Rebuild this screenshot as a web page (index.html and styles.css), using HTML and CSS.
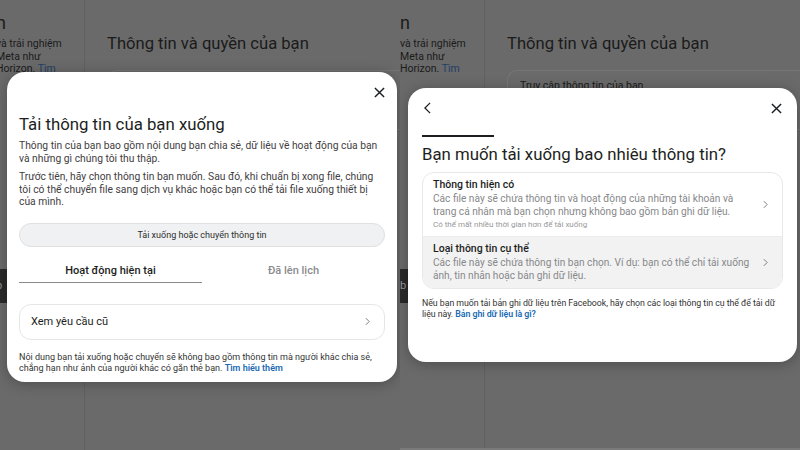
FILE: index.html
```html
<!DOCTYPE html>
<html lang="vi">
<head>
<meta charset="utf-8">
<title>Tải thông tin của bạn xuống</title>
<link rel="stylesheet" href="styles.css">
</head>
<body>
<div class="shot">
  <section class="panel panel-left">
    <div class="page">
      <aside class="side side-a">
        <div class="side-head">n</div>
        <div class="side-lines">
          <div>và trải nghiệm</div>
          <div>Meta như</div>
          <div>Horizon. <span class="dim-link">Tìm</span></div>
        </div>
        <div class="side-btn">b</div>
      </aside>
      <main class="main">
        <h2 class="main-head">Thông tin và quyền của bạn</h2>
        <div class="bg-card"><span>Truy cập thông tin của bạn</span></div>
      </main>
    </div>

    <div class="modal modal-a">
      <div class="modal-top">
        <span></span>
        <svg class="ico-x" viewBox="0 0 12 12"><path d="M1 1L11 11M11 1L1 11"/></svg>
      </div>
      <h1 class="m-title">Tải thông tin của bạn xuống</h1>
      <p class="m-text">Thông tin của bạn bao gồm nội dung bạn chia sẻ, dữ liệu về hoạt động của bạn và những gì chúng tôi thu thập.</p>
      <p class="m-text">Trước tiên, hãy chọn thông tin bạn muốn. Sau đó, khi chuẩn bị xong file, chúng tôi có thể chuyển file sang dịch vụ khác hoặc bạn có thể tải file xuống thiết bị của mình.</p>
      <div class="pill">Tải xuống hoặc chuyển thông tin</div>
      <div class="tabs">
        <div class="tab tab-on">Hoạt động hiện tại</div>
        <div class="tab">Đã lên lịch</div>
      </div>
      <div class="row-card">
        <span>Xem yêu cầu cũ</span>
        <svg class="ico-chev" viewBox="0 0 6 10"><path d="M1 1L5 5L1 9"/></svg>
      </div>
      <p class="m-foot">Nội dung bạn tải xuống hoặc chuyển sẽ không bao gồm thông tin mà người khác chia sẻ, chẳng hạn như ảnh của người khác có gắn thẻ bạn. <a class="link">Tìm hiểu thêm</a></p>
    </div>
  </section>

  <section class="panel panel-right">
    <div class="page">
      <aside class="side side-b">
        <div class="side-head">n</div>
        <div class="side-lines">
          <div>và trải nghiệm</div>
          <div>Meta như</div>
          <div>Horizon. <span class="dim-link">Tìm</span></div>
        </div>
        <div class="side-btn">b</div>
      </aside>
      <main class="main">
        <h2 class="main-head">Thông tin và quyền của bạn</h2>
        <div class="bg-card"><span>Truy cập thông tin của bạn</span></div>
      </main>
    </div>

    <div class="modal modal-b">
      <div class="modal-top">
        <svg class="ico-back" viewBox="0 0 8 14"><path d="M7 1L1 7L7 13"/></svg>
        <svg class="ico-x" viewBox="0 0 12 12"><path d="M1 1L11 11M11 1L1 11"/></svg>
      </div>
      <div class="progress"></div>
      <h1 class="m-title">Bạn muốn tải xuống bao nhiêu thông tin?</h1>
      <div class="choices">
        <div class="choice">
          <div class="choice-body">
            <div class="choice-title">Thông tin hiện có</div>
            <div class="choice-desc">Các file này sẽ chứa thông tin và hoạt động của những tài khoản và trang cá nhân mà bạn chọn nhưng không bao gồm bản ghi dữ liệu.</div>
            <div class="choice-note">Có thể mất nhiều thời gian hơn để tải xuống</div>
          </div>
          <svg class="ico-chev" viewBox="0 0 6 10"><path d="M1 1L5 5L1 9"/></svg>
        </div>
        <div class="choice choice-hover">
          <div class="choice-body">
            <div class="choice-title">Loại thông tin cụ thể</div>
            <div class="choice-desc">Các file này sẽ chứa thông tin bạn chọn. Ví dụ: bạn có thể chỉ tải xuống ảnh, tin nhắn hoặc bản ghi dữ liệu.</div>
          </div>
          <svg class="ico-chev" viewBox="0 0 6 10"><path d="M1 1L5 5L1 9"/></svg>
        </div>
      </div>
      <p class="m-foot">Nếu bạn muốn tải bản ghi dữ liệu trên Facebook, hãy chọn các loại thông tin cụ thể để tải dữ liệu này. <a class="link">Bản ghi dữ liệu là gì?</a></p>
    </div>
  </section>
</div>
</body>
</html>
```

FILE: styles.css
```css
* { box-sizing: border-box; }
html, body { margin: 0; padding: 0; }
body {
  width: 800px;
  height: 450px;
  overflow: hidden;
  background: #6a6a6a;
  font-family: Roboto, "Noto Sans", "Liberation Sans", sans-serif;
  color: #1c1e21;
}
.shot { display: flex; width: 800px; height: 450px; }
.panel {
  position: relative;
  width: 400px;
  height: 450px;
  overflow: hidden;
  background: #6a6a6a;
}
.panel-right { border-bottom: 2px solid #7a7a7a; }

/* dimmed background page */
.page { display: flex; height: 100%; }
.side {
  width: 85px;
  flex: none;
  border-right: 1px solid #606060;
  color: #1b1b1b;
  padding-top: 12px;
}
.side-a { margin-left: -4px; width: 89px; }
.side-head { font-size: 18px; line-height: 22px; height: 22px; }
.side-lines { margin-top: 4px; font-size: 10.5px; line-height: 12.5px; white-space: nowrap; }
.dim-link { color: #1f3f66; }
.side-btn {
  margin-top: 193px;
  width: 40px;
  height: 34px;
  background: #2a2a2a;
  color: #9a9a9a;
  font-size: 11px;
  line-height: 34px;
}
.main { flex: 1; padding: 33px 0 0 22px; }
.main-head {
  margin: 0;
  font-size: 16.6px;
  font-weight: 400;
  line-height: 22px;
  color: #1b1b1b;
}
.bg-card {
  margin-top: 15px;
  height: 60px;
  border: 1px solid #767676;
  border-right: none;
  border-radius: 10px 0 0 10px;
  padding: 8px 12px;
  font-size: 10.5px;
  line-height: 13px;
  color: #1b1b1b;
}

/* modals */
.modal {
  position: absolute;
  background: #fff;
  border-radius: 18px;
  box-shadow: 0 2px 14px rgba(0,0,0,0.28);
  display: flex;
  flex-direction: column;
}
.modal-a { left: 7px; top: 72px; width: 390px; height: 310px; padding: 12px 12px 0 12px; }
.modal-b { left: 8px; top: 88px; width: 389px; height: 274px; padding: 12px 14px 0 14px; }

.modal-top {
  display: flex;
  justify-content: space-between;
  align-items: center;
  height: 16px;
}
.ico-x { width: 11px; height: 11px; fill: none; stroke: #1c1e21; stroke-width: 1.6; }
.modal-a .ico-x { margin-right: 0; }
.modal-b .ico-x { margin-right: 1px; }
.ico-back { width: 7px; height: 12px; margin-left: 2px; fill: none; stroke: #1c1e21; stroke-width: 1.5; }
.ico-chev { width: 5px; height: 9px; flex: none; fill: none; stroke: #7d7d7d; stroke-width: 1.2; }

.m-title {
  margin: 13px 0 0 0;
  font-size: 16.8px;
  font-weight: 400;
  line-height: 22px;
  color: #1c1e21;
}
.modal-b .m-title { margin-top: 6px; }
.m-text {
  margin: 5px 0 6px 0;
  font-size: 10.3px;
  line-height: 12.5px;
  color: #3f4042;
}
.m-text + .m-text { margin-top: 0; }

.pill {
  margin-top: 8px;
  height: 24px;
  border-radius: 12px;
  background: #f0f1f2;
  border: 1px solid #e0e0e0;
  text-align: center;
  font-size: 9px;
  line-height: 22px;
  color: #2e2e2e;
}
.tabs { display: flex; margin-top: 17px; }
.tab {
  flex: 1;
  text-align: center;
  font-size: 11px;
  font-weight: 500;
  line-height: 14px;
  padding-bottom: 4px;
  color: #8a8b8d;
}
.tab-on { color: #1c1e21; border-bottom: 1.5px solid #8a8a8a; }

.row-card {
  margin-top: 21px;
  height: 36px;
  border: 1px solid #e6e6e6;
  border-radius: 12px;
  display: flex;
  align-items: center;
  justify-content: space-between;
  padding: 0 14px 0 11px;
  font-size: 11px;
  color: #1c1e21;
}
.m-foot {
  margin: 12px 0 0 0;
  font-size: 9px;
  line-height: 11px;
  color: #333;
}
.link { color: #1a6ab3; font-weight: 600; }

/* right modal pieces */
.progress { width: 72px; height: 2px; background: #1c1e21; margin-top: 19px; }
.choices {
  margin-top: 7px;
  border: 1px solid #e8e8e8;
  border-radius: 12px;
  overflow: hidden;
}
.choice {
  display: flex;
  align-items: center;
  justify-content: space-between;
  padding: 5px 14px 6px 10px;
}
.choice + .choice { border-top: 1px solid #ececec; }
.choice-hover { background: #f2f2f3; }
.choice-body { width: 324px; }
.choice-title { font-size: 10.5px; font-weight: 500; line-height: 13px; color: #1c1e21; }
.choice-desc { margin-top: 2px; font-size: 10.15px; line-height: 12.5px; color: #87888a; }
.choice-note { margin-top: 1px; font-size: 8px; line-height: 11px; color: #97989a; }
.modal-b .m-foot { margin-top: 9px; font-size: 8.8px; letter-spacing: -0.05px; }
```
